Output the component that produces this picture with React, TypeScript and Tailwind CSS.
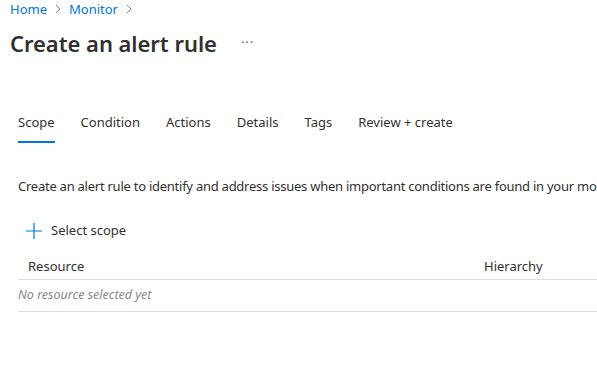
export default function App() {
  return (
    <div className="min-h-screen bg-white text-[#323130] pl-[10px]" style={{ fontFamily: '"Noto Sans", sans-serif' }}>
      <div className="flex items-center gap-[7px] text-[13px] leading-[18px] pt-0">
        <span className="text-[#0078d4]">Home</span>
        <svg width="8" height="10" viewBox="0 0 8 10"><path d="M2 1l4 4-4 4" fill="none" stroke="#8a8886" strokeWidth="1" /></svg>
        <span className="text-[#0078d4]">Monitor</span>
        <svg width="8" height="10" viewBox="0 0 8 10"><path d="M2 1l4 4-4 4" fill="none" stroke="#8a8886" strokeWidth="1" /></svg>
      </div>
      <div className="flex items-center mt-[11px] h-[28px]">
        <h1 className="text-[22px] font-semibold leading-[28px] tracking-[-0.05px]">Create an alert rule</h1>
        <span className="ml-[24px] text-[13px] tracking-[1px] text-[#605e5c]">···</span>
      </div>
      <div className="pl-[8px]">
        <div className="flex gap-[26px] mt-[54px] text-[13px]">
          <div className="flex flex-col">
            <span className="leading-[18px] pt-[2px]">Scope</span>
            <div className="h-[2px] bg-[#0078d4] mt-[10px]" />
          </div>
          <span className="leading-[18px] pt-[2px]">Condition</span>
          <span className="leading-[18px] pt-[2px]">Actions</span>
          <span className="leading-[18px] pt-[2px]">Details</span>
          <span className="leading-[18px] pt-[2px]">Tags</span>
          <span className="leading-[18px] pt-[2px]">Review + create</span>
        </div>
        <p className="mt-[34px] text-[13px] leading-[18px] tracking-[-0.25px] whitespace-nowrap overflow-hidden">
          Create an alert rule to identify and address issues when important conditions are found in your monitoring data.
        </p>
        <div className="flex items-center gap-[9px] mt-[26px] ml-[8px] text-[13px]">
          <svg width="16" height="16" viewBox="0 0 16 16"><path d="M8 0v16M0 8h16" stroke="#0078d4" strokeWidth="1.2" /></svg>
          <span>Select scope</span>
        </div>
        <div className="mt-[14px] flex text-[13px] border-b border-[#e1dfdd] h-[25px] items-center">
          <span className="pl-[10px] w-[466px]">Resource</span>
          <span>Hierarchy</span>
        </div>
        <div className="flex items-center h-[32px] border-b border-[#e1dfdd] text-[12.5px] italic text-[#8a8886]">
          No resource selected yet
        </div>
      </div>
    </div>
  )
}
